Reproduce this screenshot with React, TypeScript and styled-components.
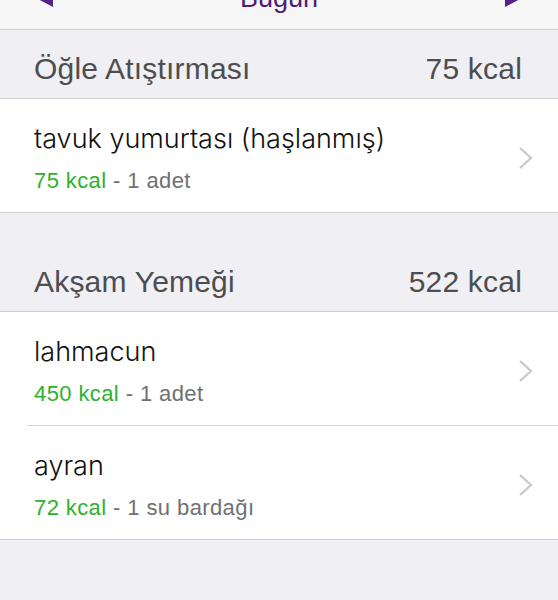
import React from 'react';
import styled, { createGlobalStyle } from 'styled-components';

type Item = { name: string; kcal: number; amount: string };
type Meal = { name: string; items: Item[] };

const meals: Meal[] = [
  {
    name: 'Öğle Atıştırması',
    items: [{ name: 'tavuk yumurtası (haşlanmış)', kcal: 75, amount: '1 adet' }],
  },
  {
    name: 'Akşam Yemeği',
    items: [
      { name: 'lahmacun', kcal: 450, amount: '1 adet' },
      { name: 'ayran', kcal: 72, amount: '1 su bardağı' },
    ],
  },
];

const GlobalStyle = createGlobalStyle`
  html, body {
    margin: 0;
    padding: 0;
    background: #efeff4;
    font-family: "Liberation Sans", Arial, sans-serif;
    -webkit-font-smoothing: antialiased;
  }
`;

const Page = styled.div`
  min-height: 600px;
  background: #efeff4;
`;

// only the lower part of the nav bar is on screen
const NavBar = styled.div`
  height: 29px;
  overflow: hidden;
  display: flex;
  align-items: flex-end;
  background: #f6f6f7;
  border-bottom: 1px solid #cfcfd3;
`;

const NavInner = styled.div`
  flex: 1 0 auto;
  height: 62px;
  padding: 0 37px;
  display: flex;
  align-items: center;
  justify-content: space-between;
`;

const NavTitle = styled.div`
  font-size: 27px;
  line-height: 32px;
  color: #4e1d78;
`;

const Section = styled.section`
  & + & {
    margin-top: 30px;
  }
`;

const Header = styled.div`
  display: flex;
  justify-content: space-between;
  padding: 21px 36px 11px 34px;
  font-size: 30px;
  line-height: 36px;
  letter-spacing: 0.2px;
  color: #4d4d4f;
  border-bottom: 1px solid #cfcfd3;
`;

const List = styled.div`
  background: #fff;
  border-bottom: 1px solid #cfcfd3;
`;

// rows that are followed by another row get an inset divider
const RowWrap = styled.div<{ $inset: boolean }>`
  padding-left: ${p => (p.$inset ? '27px' : '0')};
`;

const Row = styled.div<{ $inset: boolean }>`
  display: flex;
  align-items: center;
  padding: 23px 25px 18px ${p => (p.$inset ? '7px' : '34px')};
  border-bottom: ${p => (p.$inset ? '1px solid #d4d4d8' : 'none')};
`;

const RowBody = styled.div`
  flex: 1;
  display: flex;
  flex-direction: column;
  gap: 12px;
`;

const ItemName = styled.div`
  font-family: Inter, "Liberation Sans", sans-serif;
  font-weight: 300;
  font-size: 27px;
  line-height: 34px;
  color: #111;
`;

const ItemMeta = styled.div`
  font-size: 22px;
  line-height: 26px;
  letter-spacing: 0.4px;
  color: #707072;
`;

const Kcal = styled.span`
  color: #2eb02e;
`;

const Arrow = ({ dir }: { dir: 'left' | 'right' }) => (
  <svg width="16" height="17" viewBox="0 0 16 17">
    <polygon
      points={dir === 'left' ? '0,8.5 16,0 16,17' : '0,0 16,8.5 0,17'}
      fill="#55208a"
    />
  </svg>
);

const Chevron = () => (
  <svg width="15" height="24" viewBox="0 0 15 24">
    <path d="M2 2 L13 12 L2 22" fill="none" stroke="#c7c7cc" strokeWidth="2.2" />
  </svg>
);

const App: React.FC = () => {
  return (
    <Page>
      <GlobalStyle />
      <NavBar>
        <NavInner>
          <Arrow dir="left" />
          <NavTitle>Bugün</NavTitle>
          <Arrow dir="right" />
        </NavInner>
      </NavBar>
      {meals.map(meal => {
        const total = meal.items.reduce((s, i) => s + i.kcal, 0);
        return (
          <Section key={meal.name}>
            <Header>
              <span>{meal.name}</span>
              <span>{total} kcal</span>
            </Header>
            <List>
              {meal.items.map((item, idx) => {
                const inset = idx < meal.items.length - 1;
                return (
                  <RowWrap key={item.name} $inset={inset}>
                    <Row $inset={inset}>
                      <RowBody>
                        <ItemName>{item.name}</ItemName>
                        <ItemMeta>
                          <Kcal>{item.kcal} kcal</Kcal> - {item.amount}
                        </ItemMeta>
                      </RowBody>
                      <Chevron />
                    </Row>
                  </RowWrap>
                );
              })}
            </List>
          </Section>
        );
      })}
    </Page>
  );
};

export default App;
